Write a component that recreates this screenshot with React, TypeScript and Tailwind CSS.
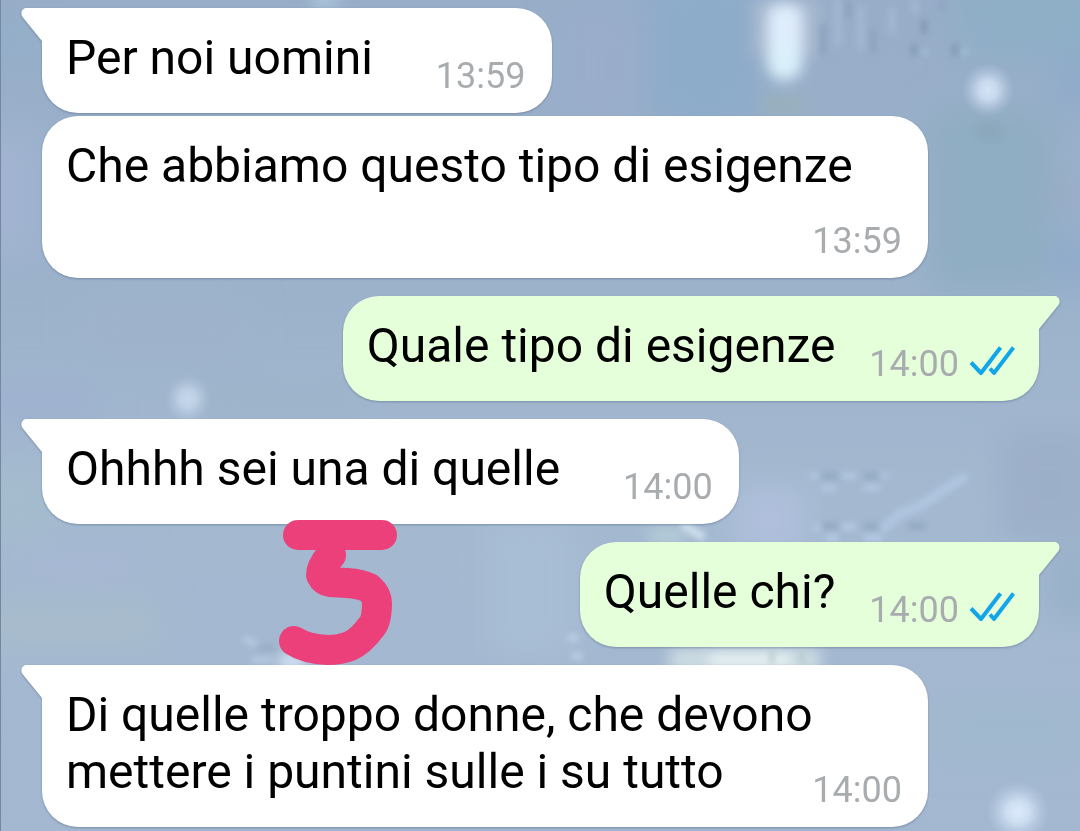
import clsx from 'clsx'

type Message = {
  id: number
  text: string
  time: string
  outgoing?: boolean
  tail?: boolean
}

const messages: Message[] = [
  { id: 1, text: 'Per noi uomini', time: '13:59', tail: true },
  { id: 2, text: 'Che abbiamo questo tipo di esigenze', time: '13:59' },
  { id: 3, text: 'Quale tipo di esigenze', time: '14:00', outgoing: true, tail: true },
  { id: 4, text: 'Ohhhh sei una di quelle', time: '14:00', tail: true },
  { id: 5, text: 'Quelle chi?', time: '14:00', outgoing: true, tail: true },
  { id: 6, text: 'Di quelle troppo donne, che devono mettere i puntini sulle i su tutto', time: '14:00', tail: true },
]

// ── Blurry snow wallpaper ──
function Wallpaper() {
  return (
    <svg
      className="absolute inset-0 w-full h-full"
      viewBox="0 0 1080 831"
      preserveAspectRatio="xMidYMid slice"
      aria-hidden="true"
    >
      <defs>
        <linearGradient id="sky" x1="0" y1="0" x2="0" y2="1">
          <stop offset="0" stopColor="#97adc8" />
          <stop offset="0.35" stopColor="#9cb2cb" />
          <stop offset="0.6" stopColor="#a4b9d0" />
          <stop offset="1" stopColor="#a3b7d1" />
        </linearGradient>
        <radialGradient id="glow">
          <stop offset="0" stopColor="#dceafb" />
          <stop offset="0.35" stopColor="#d3e3f6" stopOpacity="0.9" />
          <stop offset="1" stopColor="#bccfe5" stopOpacity="0" />
        </radialGradient>
        <filter id="soft" x="-50%" y="-50%" width="200%" height="200%">
          <feGaussianBlur stdDeviation="7" />
        </filter>
        <filter id="fine" x="-50%" y="-50%" width="200%" height="200%">
          <feGaussianBlur stdDeviation="3" />
        </filter>
        <filter id="wide" x="-50%" y="-50%" width="200%" height="200%">
          <feGaussianBlur stdDeviation="16" />
        </filter>
      </defs>
      <rect width="1080" height="831" fill="url(#sky)" />

      <g filter="url(#wide)">
        <rect x="560" y="10" width="70" height="110" fill="#9aadca" />
        <rect x="650" y="-30" width="110" height="160" fill="#8dacca" />
        <rect x="930" y="110" width="120" height="180" fill="#8fadc3" />
        <rect x="960" y="-30" width="140" height="90" fill="#8fafc7" />
        <rect x="1055" y="60" width="40" height="50" fill="#8eaacb" />
        <rect x="1050" y="180" width="40" height="30" fill="#9aabc6" />
        <rect x="1055" y="230" width="40" height="60" fill="#90abcc" />
        <rect x="-20" y="20" width="50" height="40" fill="#93afc9" />
        <rect x="-20" y="130" width="60" height="130" fill="#a1b3d0" />
        <rect x="80" y="300" width="170" height="60" fill="#9fb2cc" />
        <rect x="-20" y="385" width="120" height="35" fill="#9fb1d0" />
        <rect x="200" y="385" width="160" height="30" fill="#9cb4ca" />
        <rect x="-20" y="470" width="70" height="70" fill="#a4bccd" />
        <rect x="-20" y="600" width="180" height="50" fill="#a7bccc" />
        <rect x="20" y="550" width="120" height="30" fill="#a7b8d4" />
        <rect x="485" y="520" width="90" height="140" fill="#a8bed4" />
        <rect x="735" y="490" width="70" height="60" fill="#b0c0dd" />
        <rect x="1000" y="430" width="100" height="110" fill="#9cafc9" />
        <rect x="1045" y="550" width="60" height="70" fill="#98b1c9" />
        <rect x="930" y="700" width="160" height="60" fill="#a0b8cd" />
      </g>

      <g filter="url(#soft)">
        <rect x="752" y="0" width="68" height="56" fill="#a6b8cf" />
        <rect x="768" y="4" width="34" height="74" rx="12" fill="#dfedfc" />
        <ellipse cx="784" cy="62" rx="17" ry="18" fill="#daf0fa" />
        <rect x="762" y="96" width="44" height="18" fill="#98b0bb" />
        <rect x="978" y="124" width="24" height="14" fill="#88a4b8" />
        <ellipse cx="325" cy="0" rx="16" ry="5" fill="#b9d3e6" />
        <ellipse cx="292" cy="662" rx="14" ry="8" fill="#dceafb" />
        <rect x="670" y="648" width="150" height="24" fill="#ccdce2" />
        <rect x="710" y="654" width="80" height="12" fill="#eef8f6" />
        <rect x="650" y="528" width="34" height="16" fill="#b5ced8" />
      </g>

      <ellipse cx="988" cy="90" rx="26" ry="27" fill="url(#glow)" opacity="0.9" />
      <ellipse cx="188" cy="399" rx="23" ry="25" fill="url(#glow)" opacity="0.65" />
      <ellipse cx="1018" cy="812" rx="32" ry="31" fill="url(#glow)" />

      <g filter="url(#fine)" fill="none" strokeWidth="6">
        <path d="M823 24V56M873 30V54M848 0V18M942 0V10" stroke="#8da1be" />
        <path d="M838 0V46M861 6V50M892 8V34M915 0V14" stroke="#a6b9d5" />
        <path d="M924 20V34M914 44V56M955 44V56" stroke="#829ab5" />
        <path d="M925 50V54M965 50V54" stroke="#acc6de" />
        <path d="M810 476H818M842 476H856M882 476H888M822 488H836M864 488H880" stroke="#b4c9e3" />
        <path d="M814 528H820M842 527H856M826 538H838M864 538H882" stroke="#b8cce7" />
        <path d="M822 476H838M864 476H878M822 526H838M864 526H878M908 526H926" stroke="#90a5c1" />
        <path d="M882 530L900 514L920 506L944 490L966 476" stroke="#b0c6e1" strokeWidth="9" />
        <path d="M682 524L704 538" stroke="#ccdfec" strokeWidth="9" />
        <path d="M244 638L258 646M252 660H272" stroke="#b8cae2" />
        <path d="M256 648H276" stroke="#98acc5" />
        <path d="M772 650V664M802 652V664" stroke="#b0c3c8" strokeWidth="4" />
        <path d="M568 638H578M572 656H582" stroke="#bfd3ea" />
      </g>
      <rect width="1" height="831" fill="#7486a0" />
    </svg>
  )
}

function Tail({ outgoing }: { outgoing?: boolean }) {
  return (
    <svg
      className={clsx(
        'absolute top-0 w-6 h-9',
        outgoing ? '-right-[21px] -scale-x-100 text-[#e5ffdb]' : '-left-[21px] text-white'
      )}
      viewBox="0 0 24 36"
      fill="currentColor"
      aria-hidden="true"
    >
      <path d="M24 0H5.5C1 0-1 5.500 1.500 9L21 33V36H24Z" />
    </svg>
  )
}

function ReadTicks() {
  return (
    <svg
      className="inline-block align-baseline w-[46px] h-[30px] ml-2.5 text-[#12a5e8]"
      viewBox="0 0 46 30"
      fill="none"
      stroke="currentColor"
      strokeWidth="4"
      strokeLinejoin="round"
      role="img"
      aria-label="Letto"
    >
      <path d="M2 16.500L12 27L31.500 1.500M21 22.500L25 27L44.500 1.500" />
    </svg>
  )
}

// Hand-drawn pink mark painted over the chat
function Doodle() {
  return (
    <svg
      className="absolute z-10 left-[236px] top-[100px] w-[120px] h-[148px]"
      viewBox="278 519 120 148"
      fill="none"
      stroke="#ec407a"
      strokeWidth="30"
      strokeLinecap="round"
      strokeLinejoin="round"
      role="img"
      aria-label="5"
    >
      <path d="M298 535H382" />
      <path d="M331 555C325 562 321 570 321 575Q324 581 330 582L347 583Q361 584 369 588Q377 595 377 603Q377 620 372 626Q360 642 350 646Q340 650 328 650Q306 649 294 641" />
    </svg>
  )
}

function Bubble({ message }: { message: Message }) {
  const { text, time, outgoing, tail } = message

  return (
    <div
      className={clsx(
        'relative flow-root max-w-[886px] rounded-[36px] pt-[21px] pb-[16px] pl-6 drop-shadow-[0_1px_1px_rgba(60,80,110,0.4)]',
        outgoing ? 'self-end bg-[#e5ffdb] rounded-tr-none pr-6' : 'self-start bg-white pr-[26px]',
        tail && !outgoing && 'rounded-tl-none'
      )}
    >
      {tail && <Tail outgoing={outgoing} />}
      {text}
      {/* floats to the end of the last line, or below it when there is no room */}
      <span
        className={clsx(
          'float-right mt-[26px] text-[36px] leading-[42px] text-[#a8acaf] whitespace-nowrap',
          outgoing ? 'ml-[34px]' : 'ml-[63px]'
        )}
      >
        <time>{time}</time>
        {outgoing && <ReadTicks />}
      </span>
    </div>
  )
}

export default function App() {
  return (
    <main className="relative min-h-screen overflow-hidden bg-[#a0b3ce] font-[Roboto,sans-serif] text-[48px] leading-[57px] text-black">
      <Wallpaper />
      <ul className="relative flex flex-col pt-2 pb-1 pl-[42px] pr-[41px]">
        {messages.map((message, i) => (
          <li
            key={message.id}
            className={clsx('relative flex flex-col', i > 0 && (message.tail ? 'mt-[18px]' : 'mt-[3px]'), message.id === 4 && 'z-10')}
          >
            <Bubble message={message} />
            {message.id === 4 && <Doodle />}
          </li>
        ))}
      </ul>
    </main>
  )
}
